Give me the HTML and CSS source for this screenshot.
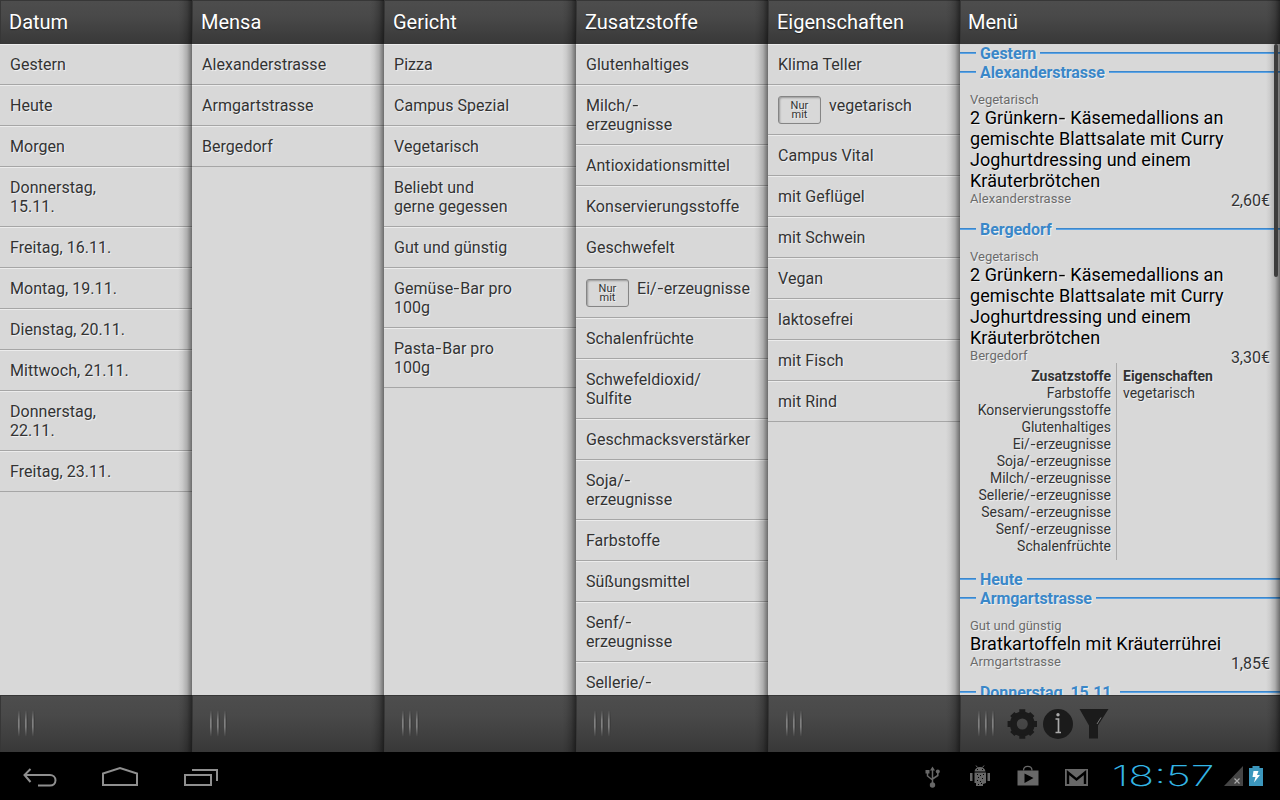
FILE: index.html
```html
<!DOCTYPE html>
<html lang="de">
<head>
<meta charset="utf-8">
<title>Mensa</title>
<link rel="stylesheet" href="styles.css">
</head>
<body>
<main class="columns">
  <section class="column">
    <h1 class="bar">Datum</h1>
    <ul class="list">
      <li>Gestern</li><li>Heute</li><li>Morgen</li><li>Donnerstag,<br>15.11.</li><li>Freitag, 16.11.</li><li>Montag, 19.11.</li><li>Dienstag, 20.11.</li><li>Mittwoch, 21.11.</li><li>Donnerstag,<br>22.11.</li><li>Freitag, 23.11.</li>
    </ul>
    <footer class="foot"><i class="grip"></i></footer>
  </section>
  <section class="column">
    <h1 class="bar">Mensa</h1>
    <ul class="list"><li>Alexanderstrasse</li><li>Armgartstrasse</li><li>Bergedorf</li></ul>
    <footer class="foot"><i class="grip"></i></footer>
  </section>
  <section class="column">
    <h1 class="bar">Gericht</h1>
    <ul class="list"><li>Pizza</li><li>Campus Spezial</li><li>Vegetarisch</li><li>Beliebt und<br>gerne gegessen</li><li>Gut und günstig</li><li>Gemüse<span class="hy">-</span>Bar pro<br>100g</li><li>Pasta<span class="hy">-</span>Bar pro<br>100g</li></ul>
    <footer class="foot"><i class="grip"></i></footer>
  </section>
  <section class="column">
    <h1 class="bar">Zusatzstoffe</h1>
    <ul class="list"><li>Glutenhaltiges</li><li>Milch/<span class="hy">-</span><br>erzeugnisse</li><li>Antioxidationsmittel</li><li>Konservierungsstoffe</li><li>Geschwefelt</li><li class="picked"><span class="only">Nur<br>mit</span><span>Ei/<span class="hy">-</span>erzeugnisse</span></li><li>Schalenfrüchte</li><li>Schwefeldioxid/<br>Sulfite</li><li>Geschmacksverstärker</li><li>Soja/<span class="hy">-</span><br>erzeugnisse</li><li>Farbstoffe</li><li>Süßungsmittel</li><li>Senf/<span class="hy">-</span><br>erzeugnisse</li><li>Sellerie/<span class="hy">-</span><br>erzeugnisse</li></ul>
    <footer class="foot"><i class="grip"></i></footer>
  </section>
  <section class="column">
    <h1 class="bar">Eigenschaften</h1>
    <ul class="list"><li>Klima Teller</li><li class="picked"><span class="only">Nur<br>mit</span>vegetarisch</li><li>Campus Vital</li><li>mit Geflügel</li><li>mit Schwein</li><li>Vegan</li><li>laktosefrei</li><li>mit Fisch</li><li>mit Rind</li></ul>
    <footer class="foot"><i class="grip"></i></footer>
  </section>
  <section class="column wide">
    <h1 class="bar">Menü</h1>
    <div class="menu">
      <h2 class="group">Gestern</h2>
      <h2 class="group">Alexanderstrasse</h2>
      <article class="dish">
        <p class="kind">Vegetarisch</p>
        <h3>2 Grünkern<span class="hy">-</span> Käsemedallions an<br>gemischte Blattsalate mit Curry<br>Joghurtdressing und einem<br>Kräuterbrötchen</h3>
        <div class="meta"><span class="place">Alexanderstrasse</span><span>2,60€</span></div>
      </article>
      <h2 class="group">Bergedorf</h2>
      <article class="dish">
        <p class="kind">Vegetarisch</p>
        <h3>2 Grünkern<span class="hy">-</span> Käsemedallions an<br>gemischte Blattsalate mit Curry<br>Joghurtdressing und einem<br>Kräuterbrötchen</h3>
        <div class="meta"><span class="place">Bergedorf</span><span>3,30€</span></div>
        <div class="details">
          <div class="additives"><b>Zusatzstoffe</b><br>Farbstoffe<br>Konservierungsstoffe<br>Glutenhaltiges<br>Ei/<span class="hy">-</span>erzeugnisse<br>Soja/<span class="hy">-</span>erzeugnisse<br>Milch/<span class="hy">-</span>erzeugnisse<br>Sellerie/<span class="hy">-</span>erzeugnisse<br>Sesam/<span class="hy">-</span>erzeugnisse<br>Senf/<span class="hy">-</span>erzeugnisse<br>Schalenfrüchte</div>
          <div class="traits"><b>Eigenschaften</b><br>vegetarisch</div>
        </div>
      </article>
      <h2 class="group">Heute</h2>
      <h2 class="group">Armgartstrasse</h2>
      <article class="dish">
        <p class="kind">Gut und günstig</p>
        <h3>Bratkartoffeln mit Kräuterrührei</h3>
        <div class="meta"><span class="place">Armgartstrasse</span><span>1,85€</span></div>
      </article>
      <h2 class="group">Donnerstag, 15.11.</h2>
    </div>
    <i class="scrollbar"></i>
    <footer class="foot"><i class="grip"></i>
      <svg class="tools" width="104" height="34" viewBox="0 0 104 34">
        <g fill="none" stroke="#1b1b1b">
          <circle cx="16.300" cy="17" r="9" stroke-width="7"/>
          <path stroke-width="6" d="M16.300 6.500V2.300M16.300 27.500v4.200M5.800 17H1.600M26.800 17H31M8.900 9.600L6.300 7M23.700 9.600L26.300 7M8.900 24.400L6.300 27M23.700 24.400l2.600 2.600"/>
        </g>
        <g fill="#1b1b1b">
          <circle cx="52" cy="17" r="15"/>
          <path d="M73.500 2h29L92 18.500V31.500h-9V18.500z"/>
        </g>
        <circle cx="52" cy="7.800" r="1.700" fill="#aaa"/>
        <path d="M49.500 12H52.500V25.500M49.500 25.500h5.500" stroke="#aaa" stroke-width="1.700" fill="none"/>
        <path d="M95 10.500l-4 6.500" stroke="#777" stroke-width="1"/>
      </svg>
    </footer>
  </section>
</main>
<nav class="system">
  <svg width="240" height="48" viewBox="0 0 240 48" fill="none" stroke="#8f8f8f" stroke-width="2">
    <path d="M30.500 17l-6 6 6 7M24 23h26c3 0 5.500 2 5.500 5.300s-2.500 5.200-5.500 5.200H38"/>
    <path d="M103 33V21.500l17-5.500 17 5.500V33z"/>
    <path d="M185 23h26v10h-26zM192 18h25v11"/>
  </svg>
  <svg width="365" height="48" viewBox="0 0 365 48">
    <g fill="#686868">
      <circle cx="17.500" cy="33" r="2.700"/><path d="M17.500 14.500l2.500 4h-5z"/><rect x="10.500" y="18" width="4" height="3.500"/><circle cx="22.800" cy="19.500" r="2"/>
      <path d="M17.500 17v16M12.500 21v3l5 4M22.800 20v3.500L17.500 27" fill="none" stroke="#686868" stroke-width="1.500"/>
      <path d="M59.500 19.500c.5-3 2.500-4.500 5.500-4.500s5 1.500 5.500 4.500zM55 21h2.500v8H55zM72.500 21H75v8h-2.500zM59.500 20.500H71V31l-3 1v2h-7v-3h-1.500z"/>
      <path d="M61 13.500l1.500 2M69 13.500l-1.500 2" stroke="#686868"/>
      <path d="M102.500 18.500h21v15h-21z"/><path d="M108.500 18.500c0-5.500 8.500-5.500 8.500 0" fill="none" stroke="#686868" stroke-width="1.300"/>
      <path d="M150 17h23v17h-23z"/>
    </g>
    <path d="M62 17h1v1h-1zM67 17h1v1h-1zM62 22h1v1h-1zM65 23h1v1h-1zM68 22h1v1h-1zM63 25h1v1h-1zM67 26h1v1h-1zM62 28h1v1h-1zM65 29h1v1h-1zM63 32h1v1h-1zM66 31h1v1h-1zM109.500 21.500l9 4.500-9 5z" fill="#000"/>
    <path d="M153 32V20.500l8.500 7 8.500-7V32" fill="none" stroke="#000" stroke-width="2.400"/>
    <text class="clock" x="197" y="34" textLength="102.500" lengthAdjust="spacingAndGlyphs">18:57</text>
    <path d="M309 34l19-20v20z" fill="#454545"/><path d="M319.500 26.500l5 5M324.500 26.500l-5 5" stroke="#aaa" stroke-width="1.200"/>
    <path d="M334 16h3.500v-2h7v2h3.500v18h-14z" fill="#3c97bd"/><path d="M338.500 19h5l-1.500 4h3l-6 7.500 1.500-5.500h-3z" fill="#fff"/>
  </svg>
</nav>
</body>
</html>
```

FILE: styles.css
```css
* { box-sizing: border-box; }
body { margin: 0; width: 1280px; height: 800px; overflow: hidden; background: #000; font: 16px/19px Roboto, sans-serif; color: #333; }
h1, h2, h3, p, ul { margin: 0; padding: 0; font-weight: 400; }
.columns { display: flex; height: 752px; }
.column { position: relative; display: flex; flex-direction: column; width: 192px; height: 752px; background: #d8d8d8; overflow: hidden; }
.column::after { content: ""; position: absolute; inset: 0 0 0 auto; width: 14px; background: linear-gradient(90deg, transparent, rgba(0,0,0,.06) 30%, rgba(0,0,0,.2) 65%, rgba(0,0,0,.5)); }
.wide { width: 320px; }
.bar, .foot { flex: none; border: 1px solid #373737; border-width: 1px 0 0 1px; background: linear-gradient(#4d4d4d, #494949 35%, #383838); }
.bar { height: 44px; padding: 0 8px; font-size: 20px; line-height: 42px; color: #fff; text-shadow: 0 1px 1px #222; }
.wide .bar { padding-left: 7px; }
.foot { display: flex; height: 57px; padding: 11px 0 0 17px; }
.grip { width: 20px; height: 33px; background: repeating-linear-gradient(90deg, #808080 0 1px, #686868 1px 2px, #3c3c3c 2px 3px, transparent 3px 7px); -webkit-mask: linear-gradient(transparent 10%, #000 40%, #000 60%, transparent 90%); mask: linear-gradient(transparent 10%, #000 40%, #000 60%, transparent 90%); }
.list { flex: 1; min-height: 0; overflow: hidden; list-style: none; white-space: nowrap; letter-spacing: .04px; text-shadow: 1px 1px 1px #f4f4f4; }
.list li { padding: 10px; border-top: 1px solid #ececec; border-bottom: 1px solid #a6a6a6; }
.hy { display: inline-block; width: .44em; text-align: center; transform: scaleX(1.3); }
.picked { display: flex; gap: 8px; }
.only { width: 43px; height: 28px; padding-top: 4px; border: 1px solid #858585; border-radius: 3px; box-shadow: inset 1px 1px 2px #999; font-size: 11px; line-height: 9px; text-align: center; }
.menu { flex: 1; min-height: 0; overflow: hidden; text-shadow: 1px 1px 1px #f4f4f4; }
.group { display: flex; gap: 4px; font-size: 16px; line-height: 19px; font-weight: 700; letter-spacing: -.06px; color: #3a87c8; white-space: nowrap; }
.group::before, .group::after { content: ""; width: 16px; height: 2px; margin-top: 8px; background: linear-gradient(#3c87cc 50%, #5ba4e6 50%); }
.group::after { flex: 1; }
.dish { padding: 10px; }
.kind { font-size: 13px; line-height: 15px; color: #6b6b6b; }
.dish h3 { font-size: 18px; line-height: 21px; letter-spacing: .06px; color: #000; white-space: nowrap; }
.meta { display: flex; justify-content: space-between; }
.place { font-size: 13px; line-height: 15px; letter-spacing: .05px; color: #6b6b6b; }
.details { display: flex; margin-top: -4px; font-size: 14px; line-height: 17px; }
.additives { width: 147px; padding: 5px 5px 5px 0; border-right: 1px solid #aaa; text-align: right; white-space: nowrap; }
.traits { padding: 5px 6px; }
.scrollbar { position: absolute; z-index: 1; top: 44px; right: 2px; width: 4px; height: 233px; background: #3d3d3d; border-radius: 2px; }
.tools { margin-left: 8px; }
.system { display: flex; justify-content: space-between; height: 48px; background: #000; }
.system svg { display: block; }
.clock { font-family: Inter, sans-serif; font-weight: 200; font-size: 28px; fill: #33b5e5; }
```
